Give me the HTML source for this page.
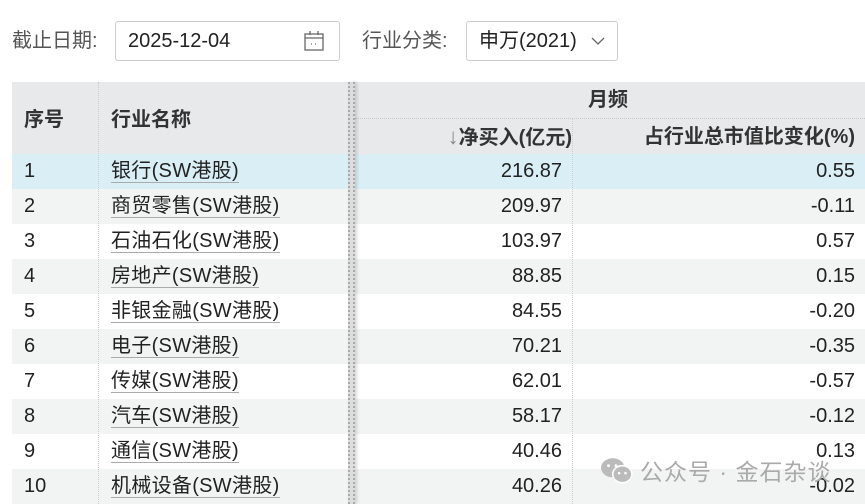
<!DOCTYPE html>
<html><head><meta charset="utf-8"><style>
*{margin:0;padding:0;box-sizing:border-box}
body{width:865px;height:504px;background:#fff;font-family:"Liberation Sans","Noto Sans CJK SC",sans-serif;color:#222;position:relative;overflow:hidden}
.lbl{position:absolute;top:28px;font-size:20px;color:#555;line-height:26px}
.box{position:absolute;top:21px;height:40px;border:1px solid #ccc;border-radius:3px;font-size:20px;color:#222;padding:6px 12px;line-height:26px}
.tbl{position:absolute;left:12px;top:82px;width:853px}
.row{position:absolute;left:0;width:853px;height:35px;font-size:20px}
.c{position:absolute;top:0;height:100%;line-height:35px}
.name span{border-bottom:1.5px solid #aaa;padding-bottom:0px;letter-spacing:0.3px}
.vd{position:absolute;top:0;bottom:0;border-left:1px dotted #ccc}
.hd{position:absolute;font-size:20px;font-weight:bold;color:#333;line-height:26px}
</style></head><body>
<div class="lbl" style="left:12px">截止日期:</div>
<div class="box" style="left:115px;width:225px">2025-12-04
<svg style="position:absolute;right:14px;top:8px" width="22" height="22" viewBox="0 0 22 22" fill="none" stroke="#666" stroke-width="1.3"><rect x="2" y="4" width="18" height="16"/><line x1="2" y1="8" x2="20" y2="8"/><line x1="7" y1="1" x2="7" y2="5"/><line x1="15" y1="1" x2="15" y2="5"/><line x1="8" y1="14" x2="9" y2="14"/><line x1="12" y1="14" x2="13" y2="14"/></svg></div>
<div class="lbl" style="left:362px">行业分类:</div>
<div class="box" style="left:466px;width:152px">申万(2021)
<svg style="position:absolute;right:12px;top:15px" width="14" height="9" viewBox="0 0 14 9" fill="none" stroke="#666" stroke-width="1.3"><path d="M1 1 L7 7 L13 1"/></svg></div>

<div class="tbl">
<div style="position:absolute;left:0;top:0;width:853px;height:72px;background:#e8e9eb"></div>
<div class="hd" style="left:12px;top:25px">序号</div>
<div class="hd" style="left:99px;top:25px">行业名称</div>
<div class="hd" style="left:576px;top:5px">月频</div>
<div style="position:absolute;left:343px;top:36px;width:510px;border-top:1px dotted #c8c8c8"></div>
<div class="hd" style="right:293px;top:42px"><span style="color:#888;font-weight:normal;font-size:22px">↓</span>净买入(亿元)</div>
<div class="hd" style="right:10px;top:42px">占行业总市值比变化(%)</div>
</div>

<div id="rows"></div>
<div class="tbl" style="top:82px;height:422px">
<div class="vd" style="left:86px"></div>
<div class="vd" style="left:560px;top:36px"></div>
<div style="position:absolute;left:336px;top:0;bottom:0;width:7px;border-left:2px dotted #aaa;border-right:2px dotted #aaa;background:#ddd;box-shadow:2px 0 3px rgba(0,0,0,.15)"></div>
</div>

<div style="position:absolute;left:600px;top:456px;width:32px;height:28px">
<svg width="34" height="30" viewBox="0 0 32 28"><ellipse cx="12" cy="11" rx="11" ry="9" fill="#bbb"/><ellipse cx="21" cy="17" rx="9" ry="8" fill="#bbb" stroke="#fff" stroke-width="1.5"/><circle cx="8" cy="9" r="1.3" fill="#fff"/><circle cx="15" cy="9" r="1.3" fill="#fff"/><circle cx="18" cy="16" r="1.2" fill="#fff"/><circle cx="24" cy="16" r="1.2" fill="#fff"/></svg></div>
<div style="position:absolute;left:640px;top:453px;font-size:23px;color:#aaa;letter-spacing:1px">公众号 · 金石杂谈</div>

<script>
var d=[["1","银行",216.87,"0.55"],["2","商贸零售",209.97,"-0.11"],["3","石油石化",103.97,"0.57"],["4","房地产",88.85,"0.15"],["5","非银金融",84.55,"-0.20"],["6","电子",70.21,"-0.35"],["7","传媒",62.01,"-0.57"],["8","汽车",58.17,"-0.12"],["9","通信",40.46,"0.13"],["10","机械设备",40.26,"-0.02"]];
var h='';d.forEach(function(r,i){var bg=i==0?'#d9eef5':(i%2?'#f2f3f3':'#fff');
h+='<div class="row" style="left:12px;top:'+(154+35*i)+'px;background:'+bg+'"><div class="c" style="left:12px">'+r[0]+'</div><div class="c name" style="left:99px"><span>'+r[1]+'(SW港股)</span></div><div class="c" style="right:303px">'+r[2].toFixed(2)+'</div><div class="c" style="right:10px">'+r[3]+'</div></div>';});
document.getElementById('rows').outerHTML=h;
</script>
</body></html>
